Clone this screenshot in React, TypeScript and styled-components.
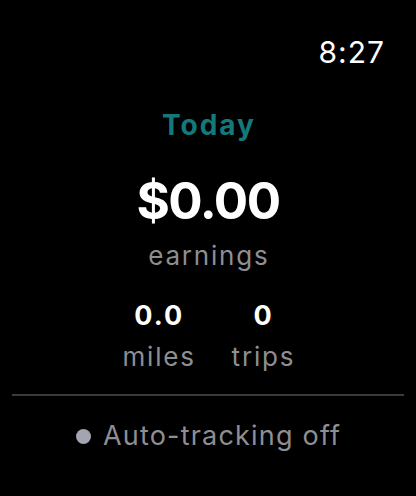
import React from "react";
import styled, { createGlobalStyle } from "styled-components";

const Global = createGlobalStyle`
  html, body { margin: 0; padding: 0; background: #000; }
  body { font-family: Inter, "Noto Sans", sans-serif; -webkit-font-smoothing: antialiased; }
`;

const Screen = styled.div`
  width: 416px;
  height: 496px;
  background: #000;
  display: flex;
  flex-direction: column;
  align-items: stretch;
  overflow: hidden;
`;

const StatusBar = styled.div`
  display: flex;
  justify-content: flex-end;
  padding: 34px 32px 0 0;
`;

const Clock = styled.div`
  color: #fff;
  font-size: 30px;
  line-height: 36px;
  font-weight: 400;
  letter-spacing: 1px;
  margin-right: -1px;
`;

const Content = styled.div`
  display: flex;
  flex-direction: column;
  align-items: center;
`;

const Title = styled.div`
  margin-top: 38px;
  color: #137a7c;
  font-size: 28px;
  line-height: 34px;
  font-weight: 700;
  letter-spacing: 2px;
  padding-left: 2px;
`;

const Amount = styled.div`
  margin-top: 29px;
  color: #fff;
  font-size: 51px;
  line-height: 60px;
  font-weight: 700;
  letter-spacing: -1.5px;
`;

const Caption = styled.div<{ $mt?: number }>`
  margin-top: ${(p) => p.$mt ?? 9}px;
  color: #8e8e93;
  font-size: 26px;
  line-height: 32px;
  font-weight: 400;
  letter-spacing: 1.8px;
  padding-left: 1.8px;
`;

const Stats = styled.div`
  margin-top: 28px;
  display: flex;
  gap: 34px;
`;

const Stat = styled.div`
  display: flex;
  flex-direction: column;
  align-items: center;
`;

const StatValue = styled.div`
  color: #fff;
  font-size: 27px;
  line-height: 32px;
  font-weight: 700;
  letter-spacing: 2px;
  padding-left: 2px;
`;

const Divider = styled.div`
  margin: 21px 12px 0;
  height: 2px;
  background: #3a3a3c;
`;

const Tracking = styled.div`
  margin-top: 23px;
  display: flex;
  align-items: center;
  justify-content: center;
  gap: 12px;
`;

const Dot = styled.span`
  width: 15px;
  height: 15px;
  border-radius: 50%;
  background: #a3a6b0;
`;

const TrackingText = styled.span`
  color: #8e8e93;
  font-size: 27px;
  line-height: 34px;
  letter-spacing: 1.2px;
  margin-right: -1.2px;
`;

export default function App() {
  return (
    <>
      <Global />
      <Screen>
        <StatusBar>
          <Clock>8:27</Clock>
        </StatusBar>
        <Content>
          <Title>Today</Title>
          <Amount>$0.00</Amount>
          <Caption>earnings</Caption>
          <Stats>
            <Stat>
              <StatValue>0.0</StatValue>
              <Caption>miles</Caption>
            </Stat>
            <Stat>
              <StatValue>0</StatValue>
              <Caption>trips</Caption>
            </Stat>
          </Stats>
        </Content>
        <Divider />
        <Tracking>
          <Dot />
          <TrackingText>Auto-tracking off</TrackingText>
        </Tracking>
      </Screen>
    </>
  );
}
